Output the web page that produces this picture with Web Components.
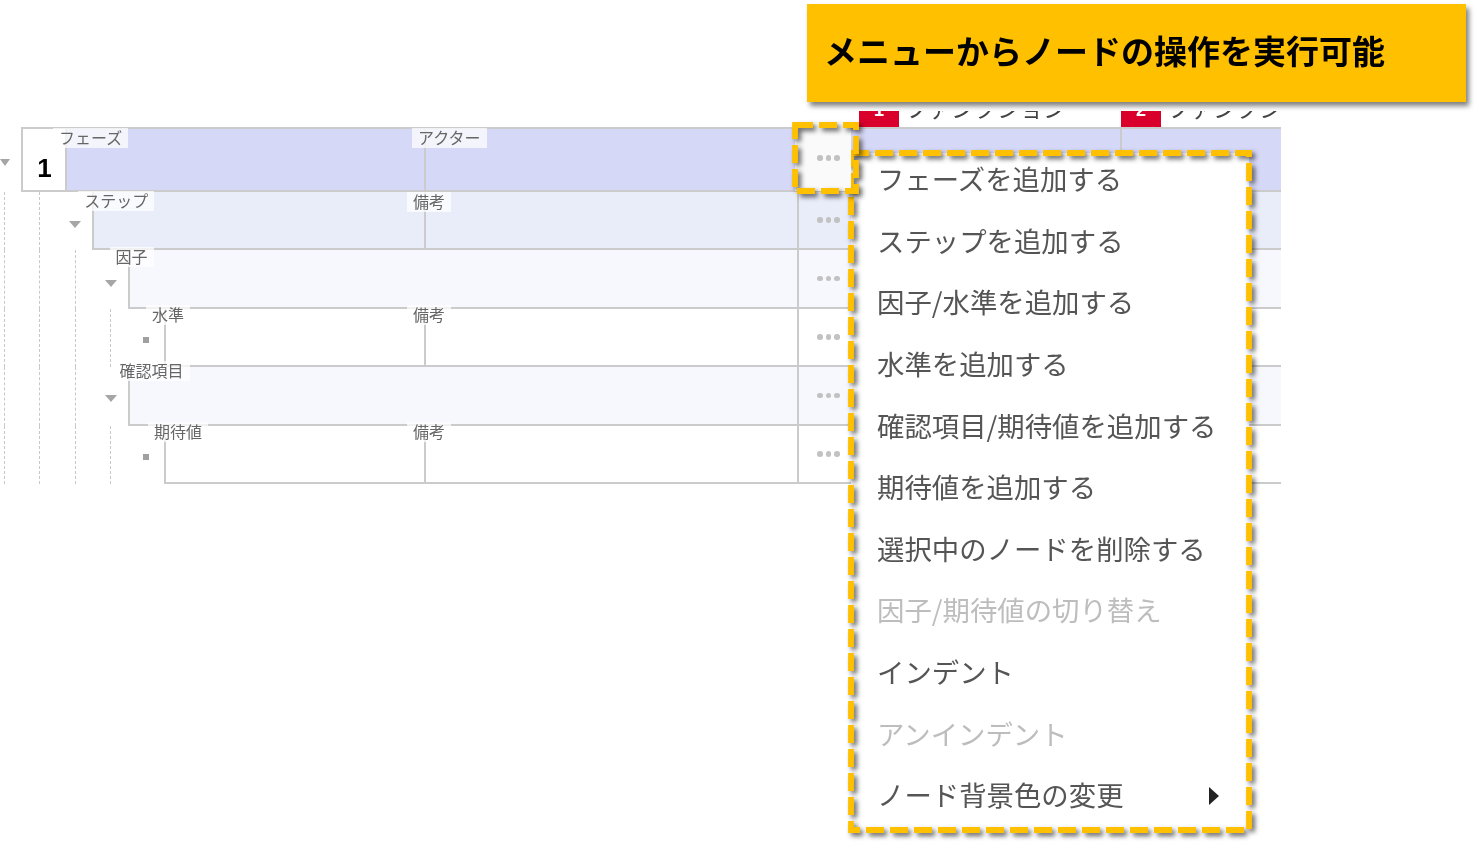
<!DOCTYPE html>
<html lang="ja">
<head>
<meta charset="utf-8">
<title>ノード操作メニュー</title>
<style>
  html, body { margin: 0; background: #fff; }
  body {
    position: relative;
    width: 1479px;
    height: 850px;
    overflow: hidden;
    font-family: "Noto Sans CJK JP", "Noto Sans", sans-serif;
  }
  tree-table { margin-top: 111px; }
</style>
</head>
<body>
  <tree-table>
    <tree-head></tree-head>
    <tree-row level="phase" num="1" mark-y="5" label="フェーズ" label-x="-14" label-top="-1.5" note="アクター" note-x="-14" note-top="-1.5"></tree-row>
    <tree-row level="step" guides="2" mark-y="6" label="ステップ" label-x="-16" label-top="-1" note="備考" note-top="0"></tree-row>
    <tree-row level="sub" guides="3" mark-y="7" label="因子" label-x="-20" label-top="-3"></tree-row>
    <tree-row level="leaf" guides="4" mark="square" mark-y="4" label="水準" label-x="-20" label-top="-4" note="備考" note-top="-4"></tree-row>
    <tree-row level="sub" guides="3" mark-y="3" label="確認項目" label-x="-16" label-top="-6"></tree-row>
    <tree-row level="leaf" guides="4" mark="square" mark-y="4" label="期待値" label-x="-18" label-top="-4" note="備考" note-top="-4"></tree-row>
  </tree-table>

  <call-out>メニューからノードの操作を実行可能</call-out>

  <node-menu>
    <menu-item>フェーズを追加する</menu-item>
    <menu-item>ステップを追加する</menu-item>
    <menu-item>因子/水準を追加する</menu-item>
    <menu-item>水準を追加する</menu-item>
    <menu-item>確認項目/期待値を追加する</menu-item>
    <menu-item>期待値を追加する</menu-item>
    <menu-item>選択中のノードを削除する</menu-item>
    <menu-item disabled>因子/期待値の切り替え</menu-item>
    <menu-item>インデント</menu-item>
    <menu-item disabled>アンインデント</menu-item>
    <menu-item sub>ノード背景色の変更</menu-item>
  </node-menu>

  <dots-focus></dots-focus>

<script>
class TreeTable extends HTMLElement {
  constructor() {
    super();
    const shadow = this.attachShadow({ mode: 'open' });
    shadow.innerHTML = `
      <style>
        :host { display: block; width: 1281px; filter: blur(.35px); }
      </style>
      <slot></slot>
    `;
  }
}

// cabecera de columnas, casi toda tapada por el cartel
class TreeHead extends HTMLElement {
  constructor() {
    super();
    const shadow = this.attachShadow({ mode: 'open' });
    shadow.innerHTML = `
      <style>
        :host {
          display: grid;
          grid-template-columns: 859px 262px 160px;
          height: 16px;
          overflow: hidden;
        }
        .col { display: flex; align-items: flex-start; min-width: 0; overflow: hidden; }
        .num {
          flex: none;
          width: 40px;
          height: 16px;
          background: #d9002b;
          color: #fff;
          font: 700 18px/24px "Liberation Sans", sans-serif;
          text-align: center;
          overflow: hidden;
        }
        .num span { display: block; margin-top: -13px; }
        .name {
          flex: none;
          margin: -20px 0 0 6px;
          color: #444;
          font-size: 23px;
          line-height: 32px;
          white-space: nowrap;
        }
      </style>
      <div></div>
      <div class="col"><div class="num"><span>1</span></div><div class="name">ファンクション</div></div>
      <div class="col"><div class="num"><span>2</span></div><div class="name">ファンクション</div></div>
    `;
  }
}

const ROW_STYLES = {
  phase: { left: 21, height: 65, bg: '#d6d8f8' },
  step: { left: 92, height: 58, bg: '#e9ecf9' },
  sub: { left: 127, height: 59, bg: '#f7f8fe' },
  leaf: { left: 164, height: 58, bg: '#ffffff' }
};

class TreeRow extends HTMLElement {
  constructor() {
    super();
    const shadow = this.attachShadow({ mode: 'open' });
    const conf = ROW_STYLES[this.getAttribute('level')];
    const guides = Number(this.getAttribute('guides') || 0);
    const mark = this.getAttribute('mark') || 'caret';
    const markY = this.getAttribute('mark-y') || 0;
    const num = this.getAttribute('num');
    const label = this.getAttribute('label');
    const note = this.getAttribute('note');
    const labelX = this.getAttribute('label-x');
    const labelTop = this.getAttribute('label-top');
    const noteX = this.getAttribute('note-x') || -19;
    const noteTop = this.getAttribute('note-top') || 0;

    let guideHtml = '';
    for (let i = 0; i < guides; i++) guideHtml += '<i></i>';

    const markHtml = mark === 'square'
      ? '<span class="square"></span>'
      : '<span class="caret"></span>';

    // las filas sin nota funden las dos primeras columnas
    const labelTag = `<span class="tag" style="left:${labelX}px;top:${labelTop}px">${label}</span>`;
    const firstCols = note
      ? `<div class="cell name">${labelTag}</div>
         <div class="cell note"><span class="tag" style="left:${noteX}px;top:${noteTop}px">${note}</span></div>`
      : `<div class="cell name wide">${labelTag}</div>`;

    shadow.innerHTML = `
      <style>
        :host {
          display: flex;
          height: ${conf.height}px;
          box-sizing: border-box;
        }
        .gutter {
          flex: 0 0 ${conf.left}px;
          display: flex;
          box-sizing: border-box;
          padding-left: ${guides ? 4 : 0}px;
        }
        i {
          flex: 0 0 35.3px;
          box-sizing: border-box;
          border-left: 1px dashed #c8c8c8;
        }
        i:last-of-type { flex-basis: 19px; }
        .mark {
          flex: 0 0 ${guides ? 34 : 10}px;
          box-sizing: border-box;
          display: flex;
          align-items: center;
          justify-content: center;
          padding-top: ${markY}px;
        }
        .caret {
          flex: none;
          width: 0;
          height: 0;
          border-left: 6.5px solid transparent;
          border-right: 6.5px solid transparent;
          border-top: 7px solid #a6a6a6;
        }
        :host([level="phase"]) .caret { border-left-width: 5.5px; border-right-width: 5.5px; }
        .square { width: 6px; height: 6px; background: #a0a0a0; }
        .node {
          flex: 1;
          min-width: 0;
          display: grid;
          grid-template-columns: ${num ? '44px' : ''} 1fr 373px 323px 161px;
          background: ${conf.bg};
          border-left: 2px solid #cbcbcb;
          border-bottom: 2px solid #cbcbcb;
          ${num ? 'border-top: 2px solid #cbcbcb;' : ''}
        }
        .no {
          background: #fff;
          border-right: 2px solid #cbcbcb;
          color: #000;
          font: 700 26px/1 "Liberation Sans", sans-serif;
          display: flex;
          align-items: center;
          justify-content: center;
          padding: 16px 0 0 1px;
          box-sizing: border-box;
        }
        .cell { position: relative; min-width: 0; }
        .wide { grid-column: span 2; }
        .note, .menu, .last { border-left: 2px solid #cbcbcb; }
        .tag {
          position: absolute;
          padding: 0 6px;
          height: 20px;
          line-height: 19px;
          font-size: 16px;
          color: #666;
          white-space: nowrap;
          background: rgba(255,255,255,.72);
        }
        .menu {
          display: flex;
          align-items: center;
          padding-left: 18px;
          gap: 3px;
        }
        .menu b { width: 5.5px; height: 5.5px; border-radius: 50%; background: #c2c2c2; }
      </style>
      <div class="gutter">${guideHtml}<span class="mark">${markHtml}</span></div>
      <div class="node">
        ${num ? `<div class="no">${num}</div>` : ''}
        ${firstCols}
        <div class="cell menu"><b></b><b></b><b></b></div>
        <div class="cell last"></div>
      </div>
    `;
  }
}

class CallOut extends HTMLElement {
  constructor() {
    super();
    const shadow = this.attachShadow({ mode: 'open' });
    shadow.innerHTML = `
      <style>
        :host {
          position: absolute;
          left: 807px;
          top: 4px;
          width: 659px;
          height: 98px;
          box-sizing: border-box;
          display: flex;
          align-items: center;
          padding: 0 0 6px 17px;
          background: #ffc000;
          box-shadow: 3px 4px 5px rgba(0,0,0,.5);
          color: #000;
          font-size: 33px;
          font-weight: 700;
          white-space: nowrap;
        }
      </style>
      <slot></slot>
    `;
  }
}

// recuadro discontinuo con sombra en cada trazo
class DashBox extends HTMLElement {
  constructor() {
    super();
    const shadow = this.attachShadow({ mode: 'open' });
    shadow.innerHTML = `
      <style>
        :host {
          position: absolute;
          display: block;
          pointer-events: none;
          filter: drop-shadow(3px 3px 2.5px rgba(0,0,0,.6));
        }
        svg { position: absolute; inset: 0; width: 100%; height: 100%; overflow: visible; }
        rect { fill: none; stroke: #ffc000; stroke-width: 5.8; stroke-dasharray: 18 6; }
      </style>
      <svg><rect x="0" y="0" width="100%" height="100%"></rect></svg>
    `;
  }
}
customElements.define('dash-box', DashBox);

// boton "..." de la fila activa, resaltado sobre el menu
class DotsFocus extends HTMLElement {
  constructor() {
    super();
    const shadow = this.attachShadow({ mode: 'open' });
    shadow.innerHTML = `
      <style>
        :host {
          position: absolute;
          left: 795px;
          top: 125px;
          width: 61px;
          height: 66px;
          box-sizing: border-box;
          display: flex;
          align-items: center;
          gap: 3px;
          padding: 0 0 0 22px;
        }
        .bg {
          position: absolute;
          left: 0;
          top: 0;
          width: 56px;
          height: 100%;
          background: #fafafa;
        }
        b { position: relative; flex: none; width: 5.5px; height: 5.5px; border-radius: 50%; background: #c2c2c2; }
        dash-box { left: 0; top: 0; width: 100%; height: 100%; }
      </style>
      <div class="bg"></div>
      <b></b><b></b><b></b>
      <dash-box></dash-box>
    `;
  }
}

class NodeMenu extends HTMLElement {
  constructor() {
    super();
    const shadow = this.attachShadow({ mode: 'open' });
    shadow.innerHTML = `
      <style>
        :host {
          position: absolute;
          left: 851px;
          top: 153px;
          width: 398px;
          height: 677px;
          display: flex;
          flex-direction: column;
          background: #fff;
          filter: blur(.3px);
        }
        dash-box { left: 0; top: 0; width: 100%; height: 100%; }
      </style>
      <slot></slot>
      <dash-box></dash-box>
    `;
  }
}

class MenuItem extends HTMLElement {
  constructor() {
    super();
    const shadow = this.attachShadow({ mode: 'open' });
    shadow.innerHTML = `
      <style>
        :host {
          display: flex;
          align-items: center;
          justify-content: space-between;
          flex: 0 0 61.6px;
          box-sizing: border-box;
          padding: 0 30px 11px 26px;
          color: #555;
          font-size: 27.4px;
          white-space: nowrap;
        }
        :host([disabled]) { color: #bdbdbd; }
        svg { display: none; width: 10px; height: 18px; margin-top: 3px; }
        :host([sub]) svg { display: block; }
      </style>
      <slot></slot>
      <svg viewBox="0 0 10 18"><path d="M0 0L10 9L0 18Z" fill="#222"/></svg>
    `;
  }
}

customElements.define('tree-table', TreeTable);
customElements.define('tree-head', TreeHead);
customElements.define('tree-row', TreeRow);
customElements.define('call-out', CallOut);
customElements.define('dots-focus', DotsFocus);
customElements.define('node-menu', NodeMenu);
customElements.define('menu-item', MenuItem);
</script>
</body>
</html>
